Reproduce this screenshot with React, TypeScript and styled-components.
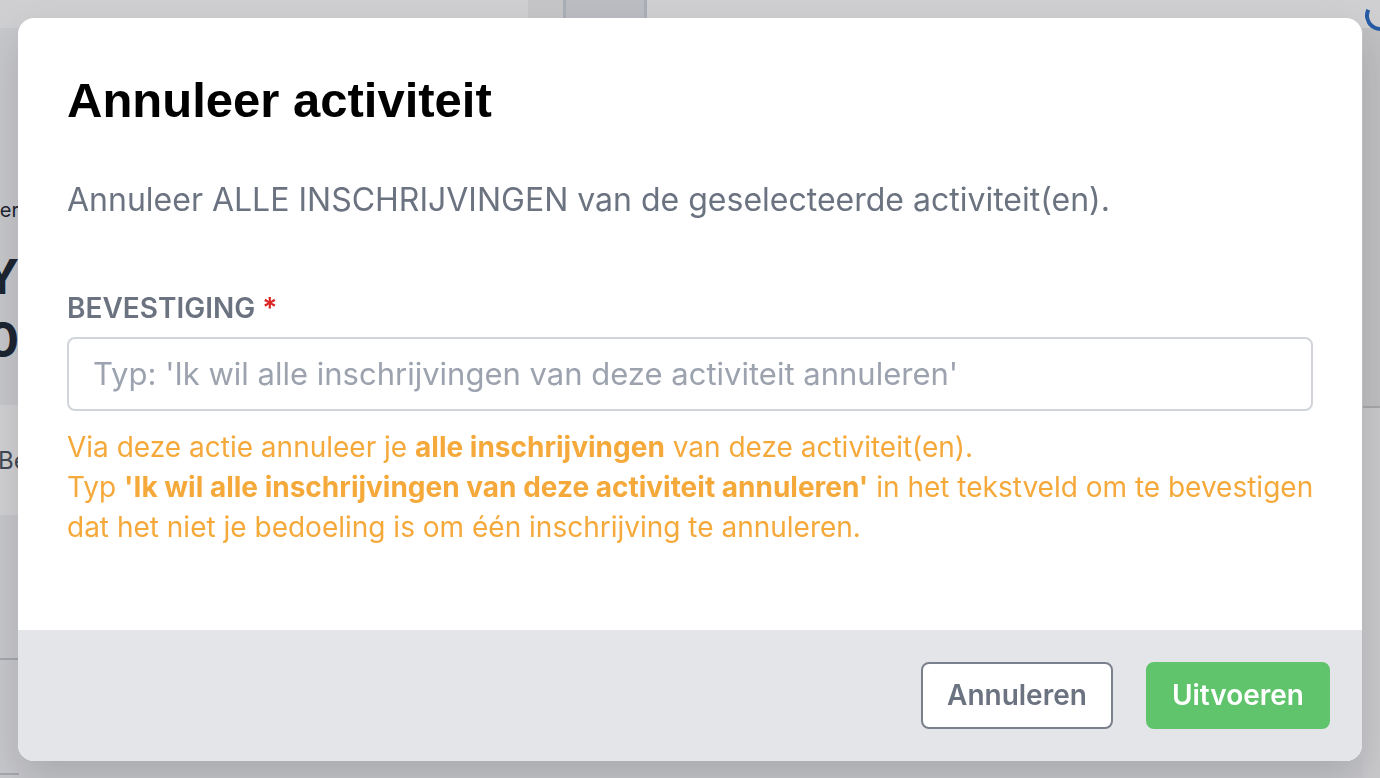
import React, { useState } from 'react';
import styled, { createGlobalStyle } from 'styled-components';

const GlobalStyle = createGlobalStyle`
  html, body {
    margin: 0;
    padding: 0;
    height: 100%;
    overflow: hidden;
  }
  body {
    font-family: Inter, "Noto Sans", sans-serif;
    background: #f3f4f6;
  }
  #root {
    height: 100%;
  }
`;

// Background page, mostly hidden by the dialog
const Page = styled.div`
  display: grid;
  grid-template-columns: 19px 1fr 17px;
  grid-template-rows: 28px 1fr;
  height: 100vh;
  background: #f3f4f6;
`;

const TopBar = styled.div`
  grid-column: 1 / -1;
  display: flex;
  background: #fdfdfd;
`;

const TopGap = styled.div<{ $w: number }>`
  width: ${(p) => p.$w}px;
`;

const TopShade = styled.div`
  width: 35px;
  background: #f1f1f2;
`;

const TopTab = styled.div`
  width: 78px;
  background: #e4e6ea;
  border-left: 3px solid #cfd4dc;
  border-right: 3px solid #cfd4dc;
`;

// spinner arc peeking out at the top right
const Spinner = styled.div`
  margin-left: auto;
  margin-top: 0;
  margin-right: -16px;
  width: 31px;
  height: 31px;
  box-sizing: border-box;
  border-radius: 50%;
  border: 4px solid transparent;
  border-bottom-color: #2b6cc4;
  border-left-color: #2b6cc4;
  transform: rotate(-20deg);
  flex-shrink: 0;
`;

const SideStrip = styled.div`
  display: flex;
  flex-direction: column;
  overflow: hidden;
  color: #1f2937;
`;

const SideLine = styled.div<{ $size: number; $bold?: boolean; $top: number }>`
  display: flex;
  justify-content: flex-end;
  white-space: nowrap;
  margin-top: ${(p) => p.$top}px;
  font-size: ${(p) => p.$size}px;
  font-weight: ${(p) => (p.$bold ? 700 : 400)};
  line-height: 1.2;
`;

const SideCard = styled.div`
  margin-top: 37px;
  height: 110px;
  background: #ffffff;
  display: flex;
  align-items: center;
  font-size: 24px;
  color: #4b5563;
  white-space: nowrap;
  text-indent: -2px;
`;

const SideRule = styled.div<{ $top: number }>`
  margin-top: ${(p) => p.$top}px;
  border-top: 2px solid #c8ccd2;
`;

const Middle = styled.div``;

const RightStrip = styled.div`
  display: flex;
  flex-direction: column;
  background: #f6f6f6;
`;

const RightTop = styled.div`
  height: 378px;
  border-bottom: 2px solid #cccccc;
  background: #eaeaea;
`;

const Overlay = styled.div`
  position: fixed;
  inset: 0;
  background: rgba(24, 27, 33, 0.2);
  display: flex;
  align-items: center;
  justify-content: center;
`;

const Dialog = styled.div`
  width: 1344px;
  background: #ffffff;
  border-radius: 16px;
  overflow: hidden;
  box-shadow: 0 20px 40px rgba(0, 0, 0, 0.15);
  display: flex;
  flex-direction: column;
`;

const Body = styled.div`
  padding: 54px 49px 83px;
  display: flex;
  flex-direction: column;
`;

const Title = styled.h2`
  margin: 0;
  font-family: "Liberation Sans", Arial, sans-serif;
  font-size: 49px;
  font-weight: 700;
  line-height: 56px;
  color: #000000;
`;

const Intro = styled.p`
  margin: 48px 0 0;
  font-size: 32px;
  line-height: 48px;
  color: #6b7280;
`;

const Label = styled.label`
  margin-top: 66px;
  font-size: 28px;
  line-height: 36px;
  font-weight: 600;
  color: #6b7280;
`;

const Required = styled.span`
  color: #dc2626;
`;

const Input = styled.input`
  margin-top: 11px;
  height: 74px;
  box-sizing: border-box;
  border: 2px solid #d1d5db;
  border-radius: 8px;
  padding: 0 24px;
  font-family: Inter, sans-serif;
  font-size: 31px;
  color: #374151;
  outline: none;

  &::placeholder {
    color: #9ca3af;
  }
`;

const Help = styled.p`
  margin: 16px -16px 0 0;
  font-size: 28px;
  line-height: 40px;
  color: #f5a93b;

  strong {
    font-weight: 700;
  }
`;

const Footer = styled.div`
  background: #e4e5e8;
  padding: 32px;
  display: flex;
  justify-content: flex-end;
  gap: 33px;
`;

const Button = styled.button<{ $primary?: boolean }>`
  height: 67px;
  box-sizing: border-box;
  padding: 0 24px;
  border-radius: 8px;
  font-family: Inter, sans-serif;
  font-size: 28px;
  font-weight: 600;
  cursor: pointer;
  border: 2px solid ${(p) => (p.$primary ? '#5fc46b' : '#7b818c')};
  background: ${(p) => (p.$primary ? '#5fc46b' : '#ffffff')};
  color: ${(p) => (p.$primary ? '#ffffff' : '#6b7280')};
`;

const App: React.FC = () => {
  const [value, setValue] = useState('');

  return (
    <>
      <GlobalStyle />
      <Page>
        <TopBar>
          <TopGap $w={528} />
          <TopShade />
          <TopTab />
          <Spinner />
        </TopBar>
        <SideStrip>
          <SideLine $size={20} $top={170}>Gebruiker</SideLine>
          <SideLine $size={48} $bold $top={26}>XY</SideLine>
          <SideLine $size={48} $bold $top={5}>2020</SideLine>
          <SideCard>Be</SideCard>
          <SideRule $top={143} />
          <SideRule $top={113} />
        </SideStrip>
        <Middle />
        <RightStrip>
          <RightTop />
        </RightStrip>
      </Page>

      <Overlay>
        <Dialog role="dialog" aria-modal="true">
          <Body>
            <Title>Annuleer activiteit</Title>
            <Intro>Annuleer ALLE INSCHRIJVINGEN van de geselecteerde activiteit(en).</Intro>
            <Label htmlFor="bevestiging">
              BEVESTIGING <Required>*</Required>
            </Label>
            <Input
              id="bevestiging"
              value={value}
              onChange={(e) => setValue(e.target.value)}
              placeholder="Typ: 'Ik wil alle inschrijvingen van deze activiteit annuleren'"
            />
            <Help>
              Via deze actie annuleer je <strong>alle inschrijvingen</strong> van deze activiteit(en).
              <br />
              Typ <strong>'Ik wil alle inschrijvingen van deze activiteit annuleren'</strong> in het tekstveld om te bevestigen
              dat het niet je bedoeling is om één inschrijving te annuleren.
            </Help>
          </Body>
          <Footer>
            <Button>Annuleren</Button>
            <Button $primary>Uitvoeren</Button>
          </Footer>
        </Dialog>
      </Overlay>
    </>
  );
};

export default App;
